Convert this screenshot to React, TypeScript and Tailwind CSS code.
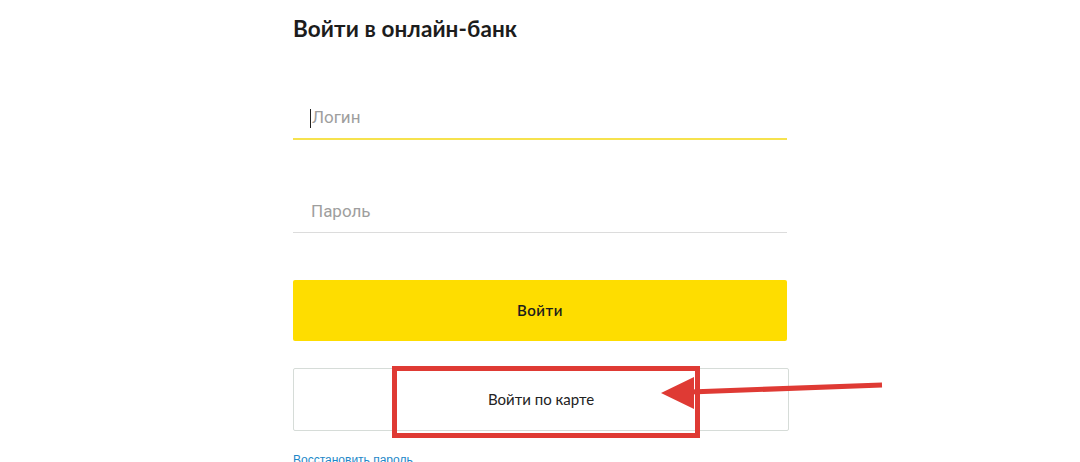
export default function App() {
  return (
    <div className="relative h-[462px] w-full overflow-hidden bg-white">
      <div className="ml-[293px] flex w-[496px] flex-col pt-[13px]">
        <h1 className="font-['Lato',sans-serif] text-[22.5px] font-bold leading-[32px] tracking-[0.1px] text-[#1c1c1c]">
          Войти в онлайн-банк
        </h1>

        <div className="mt-[53px] flex w-[494px] flex-col">
          <div className="flex h-[40px] items-center pl-[17px] font-['Roboto',sans-serif] text-[17px] text-[#9e9e9e]">
            <span className="mr-[1px] h-[19px] w-[1px] bg-[#222]" />
            Логин
          </div>
          <div className="h-[2px] bg-[#f6e24e]" />
        </div>

        <div className="mt-[52px] flex w-[494px] flex-col">
          <div className="flex h-[40px] items-center pl-[18px] font-['Roboto',sans-serif] text-[17px] text-[#9e9e9e]">
            Пароль
          </div>
          <div className="h-[1px] bg-[#dcdcdc]" />
        </div>

        <button className="mt-[47px] h-[61px] w-[494px] rounded-[2px] bg-[#fedd00] font-['Lato',sans-serif] text-[15px] font-semibold tracking-[0.5px] text-[#1c1c1c]">
          Войти
        </button>

        <button className="mt-[27px] h-[63px] w-[496px] rounded-[2px] border border-[#d6dcd8] bg-white font-['Lato',sans-serif] text-[15px] text-[#222]">
          Войти по карте
        </button>

        <a className="mt-[20px] font-['Liberation_Sans',sans-serif] text-[12px] text-[#1e88c8]">
          Восстановить пароль
        </a>
      </div>

      <div className="absolute left-[392px] top-[366px] h-[72px] w-[308px] border-[5px] border-[#df3a34]" />

      <svg className="absolute left-0 top-0" width="1080" height="462">
        <line x1="882" y1="385" x2="690" y2="392" stroke="#df3a34" strokeWidth="5" />
        <polygon points="661,393 694,377 694,409" fill="#df3a34" />
      </svg>
    </div>
  );
}
